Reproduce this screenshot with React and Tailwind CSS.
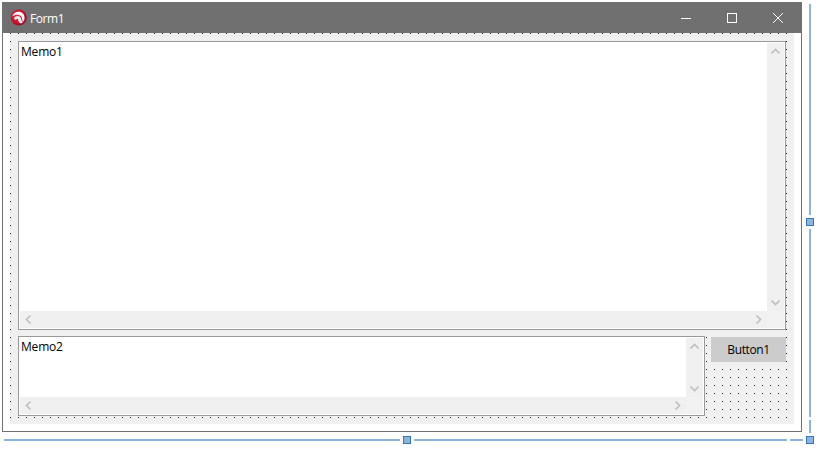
import React from "react";

function Chevron({ dir }) {
  const paths = {
    up: "M0.5 6.5 L4.5 2.5 L8.5 6.5",
    down: "M0.5 2.5 L4.5 6.5 L8.5 2.5",
    left: "M6.5 0.5 L2.5 4.5 L6.5 8.5",
    right: "M2.5 0.5 L6.5 4.5 L2.5 8.5",
  };
  return (
    <svg width="9" height="9" viewBox="0 0 9 9" fill="none" stroke="#bfbfbf" strokeWidth="1.6">
      <path d={paths[dir]} />
    </svg>
  );
}

function Memo({ text, className }) {
  return (
    <div className={`flex flex-col border border-[#999999] bg-white p-px ${className}`}>
      <div className="flex min-h-0 flex-1">
        <div className="flex-1 pl-px text-[12px] leading-[18px] tracking-[-0.2px] text-black">{text}</div>
        <div className="flex w-[17px] flex-col items-center justify-between bg-[#f0f0f0] py-1">
          <Chevron dir="up" />
          <Chevron dir="down" />
        </div>
      </div>
      <div className="flex h-[17px] shrink-0 bg-[#f0f0f0]">
        <div className="flex flex-1 items-center justify-between px-1">
          <Chevron dir="left" />
          <Chevron dir="right" />
        </div>
        <div className="w-[17px] bg-[#f2f2f2]" />
      </div>
    </div>
  );
}

function Logo() {
  return (
    <svg width="17" height="17" viewBox="0 0 17 17">
      <defs>
        <radialGradient id="ball" cx="0.4" cy="0.4" r="0.65">
          <stop offset="0" stopColor="#e02840" />
          <stop offset="0.6" stopColor="#cc1430" />
          <stop offset="1" stopColor="#960c20" />
        </radialGradient>
      </defs>
      <circle cx="8.8" cy="8.5" r="8" fill="url(#ball)" />
      <path d="M2.2 7.4 C3.4 3.6 7 1.8 10.6 3 C14.4 4.4 15.4 8.4 13.8 12.4 L12.2 11.2 C12.4 8.6 11.4 6.6 9 5.9 C6.6 5.3 4.2 5.9 2.2 7.4 Z" fill="#fff" />
      <path d="M4 9.2 C4.8 7.2 7.6 6.4 9.6 7.6 C11.2 8.6 10.8 10.2 11.8 11.8 L13 13.2 L11 14.6 C9 13.8 8.2 12.4 8.3 10.8 L7.4 9.8 L5.2 10.9 Z" fill="#fbe9eb" />
    </svg>
  );
}

function Handle() {
  return <div className="size-2 shrink-0 border border-[#3a75b5] bg-[#8cb4e0]" />;
}

export default function App() {
  return (
    <div className="flex h-[449px] w-[820px] flex-col overflow-hidden bg-white pt-0.5 pl-0.5 font-['Open_Sans','Noto_Sans',sans-serif]">
      <div className="flex h-[434px] shrink-0">
        <div className="flex h-[430px] w-[800px] shrink-0 flex-col border border-t-0 border-[#707070] bg-white">
          <div className="-mx-px flex h-[31px] shrink-0 items-center bg-[#707070] pl-2">
            <Logo />
            <span className="mt-0.5 ml-[3px] text-[12px] leading-[18px] tracking-[-0.4px] text-white">Form1</span>
            <svg className="ml-auto" width="137" height="31" viewBox="0 0 137 31" fill="none" stroke="#fff">
              <path d="M16 16.5 H26" />
              <rect x="62.5" y="11.5" width="9" height="9" />
              <path d="M108 11 L118 21 M118 11 L108 21" />
            </svg>
          </div>
          <div className="ml-[7px] flex h-[391px] w-[784px] flex-col bg-[#f0f0f0] bg-[conic-gradient(from_270deg_at_1px_1px,#202020_90deg,transparent_0)] bg-[length:8px_8px] pt-2 pl-2">
            <Memo text="Memo1" className="h-[289px] w-[768px] shrink-0" />
            <div className="mt-1.5 flex">
              <Memo text="Memo2" className="h-20 w-[687px] shrink-0" />
              <button className="mt-px ml-1.5 h-[25px] w-[75px] bg-[#cccccc] text-[12px] leading-[18px] tracking-[-0.4px] text-black">
                Button1
              </button>
            </div>
          </div>
        </div>
        <div className="ml-1 flex w-2 flex-col items-center pt-0.5">
          <div className="h-[211px] w-0.5 shrink-0 bg-[#8cb4e0]" />
          <div className="my-[3px]"><Handle /></div>
          <div className="h-[188px] w-0.5 shrink-0 bg-[#8cb4e0]" />
          <div className="mt-[3px] h-[13px] w-0.5 shrink-0 bg-[#8cb4e0]" />
        </div>
      </div>
      <div className="flex h-2 shrink-0 items-center pl-0.5">
        <div className="h-0.5 w-[396px] bg-[#8cb4e0]" />
        <div className="mx-[3px]"><Handle /></div>
        <div className="h-0.5 w-[373px] bg-[#8cb4e0]" />
        <div className="mx-[3px] h-0.5 w-[13px] bg-[#8cb4e0]" />
        <Handle />
      </div>
    </div>
  );
}
